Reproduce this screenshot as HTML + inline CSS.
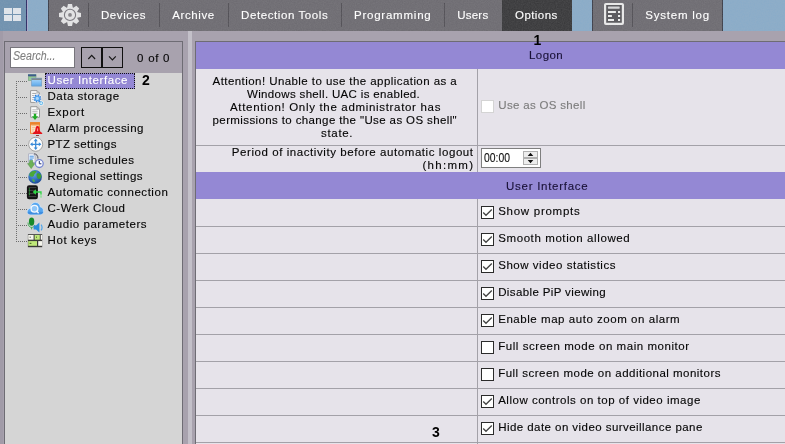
<!DOCTYPE html>
<html><head><meta charset="utf-8"><title>Options</title>
<style>
html,body{margin:0;padding:0}
body{width:785px;height:444px;overflow:hidden;position:relative;background:#a8a2ae;font-family:"Liberation Sans",sans-serif;}
.a{position:absolute}
.t{-webkit-text-stroke:0.12px currentColor;position:absolute;white-space:pre;line-height:16px;height:16px;font-family:"Liberation Sans",sans-serif}
.sep{position:absolute;top:3px;height:24px;width:1px;background:#525056}
.hl{position:absolute;height:1px;background:#a3a1a8}
.cb{position:absolute;width:11px;height:11px;border:1px solid #2b2b2b;background:#fff}
.b{position:absolute;font-weight:bold;font-size:14px;line-height:16px;color:#000;font-family:"Liberation Sans",sans-serif}
</style></head><body><div id="root" style="position:absolute;left:0;top:0;width:785px;height:444px;overflow:hidden;will-change:transform;background:#a8a2ae">
<!-- top bar -->
<div class="a" style="left:0;top:0;width:785px;height:31px;background:#8aacc9"></div>
<div class="a" style="left:0;top:0;width:26px;height:31px;background:#7092b0"></div>
<div class="a" style="left:26px;top:0;width:1px;height:31px;background:#2e2e66"></div><div class="a" style="left:27px;top:0;width:1px;height:31px;background:#a9a8cc"></div>
<div class="a" style="left:48px;top:0;width:454px;height:31px;background:#6e6c72"></div>
<div class="a" style="left:502px;top:0;width:70px;height:31px;background:#3a3a3c"></div>
<div class="a" style="left:592px;top:0;width:131px;height:31px;background:#6e6c72"></div>
<div class="a" style="left:48px;top:0;width:1px;height:31px;background:#3d3f4a"></div><div class="a" style="left:592px;top:0;width:1px;height:31px;background:#3d3f4a"></div><div class="a" style="left:722px;top:0;width:1px;height:31px;background:#3d3f4a"></div><div class="sep" style="left:88px"></div><div class="sep" style="left:159px"></div><div class="sep" style="left:228px"></div>
<div class="sep" style="left:341px"></div><div class="sep" style="left:444px"></div><div class="sep" style="left:632px"></div>
<svg class="a" style="left:0;top:0;opacity:0.11" width="785" height="31"><filter id="nz" x="0" y="0" width="100%" height="100%"><feTurbulence type="fractalNoise" baseFrequency="0.85" numOctaves="2" seed="3"/><feColorMatrix type="matrix" values="0 0 0 0 0.5  0 0 0 0 0.5  0 0 0 0 0.5  1.6 0 0 0 -0.3"/></filter><rect width="785" height="31" filter="url(#nz)"/></svg>
<!-- windows icon -->
<svg class="a" style="left:0;top:0" width="26" height="31"><g fill="#dfe4ea"><rect x="4" y="8" width="8" height="6"/><rect x="13" y="8" width="8" height="6"/><rect x="4" y="15" width="8" height="6"/><rect x="13" y="15" width="8" height="6"/></g></svg>
<!-- gear -->
<svg class="a" style="left:56px;top:1px" width="28" height="28" viewBox="-14 -13.9 28 28"><g fill="#e2e2e3">
<circle r="7.7"/>
<g id="tt"><path d="M-2 -11 H2 L2.9 -7 V7 L2 11 H-2 L-2.9 7 V-7Z"/></g>
<use href="#tt" transform="rotate(45)"/><use href="#tt" transform="rotate(90)"/><use href="#tt" transform="rotate(135)"/>
</g><circle r="5.6" fill="none" stroke="#7c7a80" stroke-width="1.1"/><circle r="1.9" fill="#87858a"/></svg>
<!-- log icon -->
<svg class="a" style="left:603px;top:2px" width="23" height="25" viewBox="0 0 23 25"><rect x="2.1" y="2" width="17.8" height="19.8" rx="0.8" fill="#5d5c60" stroke="#e8e8e8" stroke-width="2.2"/>
<g fill="#ececec"><rect x="4.9" y="4.5" width="11.8" height="2.2" rx="0.6" fill="#d6d6d8"/><rect x="5" y="9" width="7.9" height="2"/><rect x="5" y="13" width="3.9" height="2"/><rect x="5" y="17" width="6" height="2"/><rect x="15" y="9" width="2.1" height="2"/><rect x="15" y="13" width="2.1" height="2"/><rect x="15" y="17" width="2.1" height="2"/></g></svg>

<!-- left panel -->
<div class="a" style="left:0;top:31px;width:3px;height:413px;background:#a19ba8"></div>
<div class="a" style="left:4px;top:41px;width:179px;height:420px;border:1px solid #6e6c74;box-sizing:border-box;background:#a8a2ae"></div>
<div class="a" style="left:5px;top:73px;width:177px;height:380px;background:#d5d5d5"></div>
<div class="a" style="left:10px;top:47px;width:65px;height:21px;box-sizing:border-box;border:1px solid #77757c;background:#fff"></div>
<div class="a" style="left:81px;top:47px;width:21px;height:21px;box-sizing:border-box;border:1px solid #111;background:#a8a2ae"></div>
<div class="a" style="left:102px;top:47px;width:21px;height:21px;box-sizing:border-box;border:1px solid #111;background:#a8a2ae"></div>
<svg class="a" style="left:81px;top:47px" width="42" height="21"><path d="M7.3 12 L10.7 8.4 L14.1 12 M28 9.4 L31.4 13 L34.8 9.4" fill="none" stroke="#161616" stroke-width="1.15"/></svg>
<!-- tree selection -->
<div class="a" style="left:45px;top:73px;width:90px;height:16px;box-sizing:border-box;border:1px dotted #111;background:#9488d4"></div>
<!-- tree dotted lines -->
<svg class="a" style="left:0;top:73px" width="60" height="180"><g stroke="#6c6c6c" stroke-width="1" stroke-dasharray="1 1" fill="none">
<path d="M16.5 8 V169"/>
<path d="M18 8.5H27M18 24.5H27M18 40.5H27M18 56.5H27M18 72.5H27M18 88.5H27M18 104.5H27M18 120.5H27M18 136.5H27M18 152.5H27M18 168.5H27"/></g></svg>
<!--ICONS_START--><!-- icon1: user interface -->
<svg class="a" style="left:27px;top:73px" width="17" height="16"><defs><linearGradient id="wg" x1="0" y1="0" x2="0" y2="1"><stop offset="0" stop-color="#b4dcfb"/><stop offset="1" stop-color="#58a6ea"/></linearGradient></defs><rect x="1" y="1.3" width="8.2" height="6.4" fill="#93cd93"/><rect x="1" y="1.3" width="8.2" height="2.1" fill="#3d5b8c"/><rect x="1.3" y="3.4" width="7.6" height="4" fill="none" stroke="#7da08a" stroke-width="0.6"/>
<rect x="4.4" y="4.9" width="10.5" height="8.4" fill="url(#wg)"/><rect x="4.4" y="4.9" width="10.5" height="2.1" fill="#7f878e"/><rect x="4.7" y="5.2" width="9.9" height="7.8" fill="none" stroke="#7b9cbb" stroke-width="0.6"/></svg>
<!-- icon2: data storage -->
<svg class="a" style="left:27px;top:89px" width="18" height="17"><path d="M3.6 1.6 H10 L12.4 4 V13.4 H3.6Z" fill="#fbfbfb" stroke="#8f8f8f" stroke-width="0.9"/><path d="M10 1.6 V4 H12.4" fill="none" stroke="#9a9a9a" stroke-width="0.8"/><path d="M5.2 4.4H9.6M5.2 6.5H9M5.2 8.6H6.6M5.2 10.6H6.6" stroke="#9a9a9a" stroke-width="0.9"/>
<circle cx="10.3" cy="9.4" r="4.7" fill="#fff" opacity="0.55"/><circle cx="14.2" cy="14.2" r="2.7" fill="#fff" opacity="0.55"/>
<circle cx="10.3" cy="9.4" r="3.3" fill="none" stroke="#2f76d2" stroke-width="1.5" stroke-dasharray="1.3 1.29"/><circle cx="10.3" cy="9.4" r="2.3" fill="#a9d6fc" stroke="#4fa2ee" stroke-width="1.3"/>
<circle cx="14.2" cy="14.2" r="1.5" fill="#d2eefb" stroke="#5fb6ea" stroke-width="0.9"/><path d="M12.2 11.6 L13.2 12.8" stroke="#3a86da" stroke-width="1.2"/></svg>
<!-- icon3: export -->
<svg class="a" style="left:27px;top:105px" width="18" height="17"><path d="M3.7 1.7 H10 L12.5 4.2 V12.3 H3.7Z" fill="#fbfbfb" stroke="#8f8f8f" stroke-width="0.9"/><path d="M10 1.7 V4.2 H12.5" fill="none" stroke="#9a9a9a" stroke-width="0.8"/><path d="M5.3 4.8H10.6M5.3 6.6H10.6M5.3 8.3H10.6" stroke="#b4b4b4" stroke-width="0.9"/>
<path d="M6.8 8.7 H9.2 V11.2 H11.1 L8 14.9 L4.9 11.2 H6.8Z" fill="#20ac24"/></svg>
<!-- icon4: alarm -->
<svg class="a" style="left:27px;top:121px" width="18" height="17"><rect x="3.1" y="1.2" width="9.8" height="11.6" fill="#fbead4"/><rect x="3.1" y="1.2" width="9.8" height="2.6" fill="#ea842c"/><rect x="3.6" y="1.7" width="8.8" height="10.6" fill="none" stroke="#ea842c" stroke-width="1"/><path d="M4.4 4.6H12.4" stroke="#f3b068" stroke-width="0.8"/><path d="M5 6.4H8M5 8.2H7.6M5 10H7" stroke="#f0b982" stroke-width="0.9"/>
<path d="M10.2 5 C9 5 8.7 6.2 8.5 7.4 C8.3 9 8.1 10 7.5 10.8 L5.8 12.1 V12.9 H15.2 V12.1 L13.5 10.8 C12.9 10 12.7 9 12.5 7.4 C12.3 6.2 12 5 10.8 5Z" fill="#e3141a"/><rect x="10" y="7.4" width="1.1" height="2.8" fill="#ff8f84"/><rect x="9" y="14" width="3" height="0.9" fill="#8e2a2a"/></svg>
<!-- icon5: ptz -->
<svg class="a" style="left:27px;top:136px" width="18" height="17"><circle cx="8.7" cy="8.3" r="7" fill="#fdfdfd" stroke="#9a9a9a" stroke-width="0.9"/>
<g stroke="#3b8bd8" stroke-width="1.3" fill="none"><path d="M8.7 3.6V13M4 8.3H13.4"/></g><g fill="#3b8bd8"><path d="M8.7 2.6 L10.7 5.2 H6.7Z M8.7 14 L10.7 11.4 H6.7Z M3 8.3 L5.6 6.3 V10.3Z M14.4 8.3 L11.8 6.3 V10.3Z"/></g></svg>
<!-- icon6: time schedules -->
<svg class="a" style="left:26px;top:152px" width="20" height="18"><path d="M2.6 1.8 H7.2 L9 3.6 V10.5 H2.6Z" fill="#fbfbff" stroke="#a9adc0" stroke-width="0.9"/><path d="M3.6 4.2H7.8M3.6 6H7.8M3.6 7.8H6.6" stroke="#3f8fe0" stroke-width="1"/>
<path d="M3.6 8.4 H6.8 V11.6 H8.8 L5.2 16.6 L1.6 11.6 H3.6Z" fill="#6db257" stroke="#4c9040" stroke-width="0.5"/>
<circle cx="13.3" cy="11.6" r="3.9" fill="#fafaff" stroke="#7686d2" stroke-width="1.3"/><path d="M13.3 9 V11.8 H15.4" fill="none" stroke="#26346a" stroke-width="1"/><path d="M8 1.8 C10.6 2 12 3.6 12 6.6" fill="none" stroke="#445" stroke-width="0.9"/></svg>
<!-- icon7: globe -->
<svg class="a" style="left:27px;top:169px" width="17" height="16"><defs><radialGradient id="gg" cx="0.4" cy="0.3" r="0.8"><stop offset="0" stop-color="#6ea6e6"/><stop offset="0.55" stop-color="#2f6cbc"/><stop offset="1" stop-color="#173f86"/></radialGradient></defs><circle cx="8.1" cy="7.9" r="6.8" fill="url(#gg)"/>
<path d="M3.2 3.8 C4.8 1.8 8.2 1.2 9.6 2.4 C9 4 7.4 4.4 7 6.2 C6.6 8 4.6 8 2.6 7 C2.2 5.6 2.4 4.8 3.2 3.8Z" fill="#4aa83a"/><path d="M10 4.6 C12 3.6 14 5 14.4 7 C14.2 9.2 12.4 10.6 11 9.8 C9.8 8.6 9 6 10 4.6Z" fill="#3f9c36"/><path d="M5.4 10 C6.8 9.8 8.2 11 7.6 13 C6.6 13.4 5 12 5.4 10Z" fill="#4fb046"/></svg>
<!-- icon8: server -->
<svg class="a" style="left:26px;top:185px" width="20" height="16"><rect x="0.9" y="0.2" width="11" height="14" rx="2.2" fill="#131313"/><path d="M2.6 2.6H10.2M2.6 5.4H10.2M2.6 8.6H10.2M2.6 11.6H10.2" stroke="#4a4a4a" stroke-width="0.9"/><path d="M3.4 3.6V11" stroke="#35c045" stroke-width="1.1" stroke-dasharray="1 0.9"/>
<path d="M8.4 7 H15 V9" fill="none" stroke="#2fd243" stroke-width="1.3"/><path d="M15 9V13.6" stroke="#58ea6a" stroke-width="1.2" stroke-dasharray="1.4 0.8"/><path d="M6.6 7 L10 4.2 V9.8Z" fill="#2fd243"/></svg>
<!-- icon9: cloud -->
<svg class="a" style="left:26px;top:201px" width="20" height="16"><path d="M4.6 13.6 C1.8 13.6 0.8 11.2 1.6 9.4 C2.2 8 3.4 7.4 4.4 7.4 C4.4 4 6.6 1.4 9.4 1.4 C12.2 1.4 14 3.4 14.4 6 C16.4 6.2 17.6 8 17.4 10 C17.2 12.2 15.8 13.6 14 13.6Z" fill="#55a6f0" stroke="#cfe6fb" stroke-width="0.8"/><path d="M4.6 13.6 C2.8 13.6 1.5 12.4 1.4 10.8 H17.4 C17 12.6 15.8 13.6 14 13.6Z" fill="#3f8ee0"/>
<circle cx="8.5" cy="7.7" r="3.4" fill="#8ec6f8" stroke="#f4faff" stroke-width="1.3"/><path d="M10.4 9.8 L12.6 12.2" stroke="#f4faff" stroke-width="1.3"/></svg>
<!-- icon10: audio -->
<svg class="a" style="left:26px;top:216px" width="20" height="18"><ellipse cx="5.6" cy="5.6" rx="2.7" ry="4.2" fill="#178a2a"/><path d="M2 6.5 C2 10 4 11.4 5.6 11.4 C7 11.4 8.4 10.6 9 9" fill="none" stroke="#35a84a" stroke-width="0.9"/><path d="M5.6 11.4V13.4" stroke="#35a84a" stroke-width="0.9"/>
<path d="M7.6 9.4 H10 L13.4 6.4 V16.6 L10 13.6 H7.6Z" fill="#2a8cdc"/><path d="M15 8.6 C16.4 10 16.4 13 15 14.4" fill="none" stroke="#4aa4ec" stroke-width="1.2"/></svg>
<!-- icon11: hot keys -->
<svg class="a" style="left:27px;top:234px" width="17" height="14"><rect x="0.9" y="0.2" width="14.3" height="13" fill="#3a3a38"/><rect x="1.2" y="1" width="5.4" height="4.7" fill="#f6f6ee"/><rect x="7.6" y="1" width="5.2" height="4.7" fill="#bfe87a"/><rect x="13.7" y="1" width="1.5" height="4.7" fill="#f6f6ee"/><rect x="1.2" y="7.1" width="8.8" height="4.7" fill="#bfe87a"/><rect x="11.2" y="7.1" width="4" height="4.7" fill="#f6f6ee"/><rect x="2.6" y="2.6" width="1.2" height="1.2" fill="#666"/><rect x="9" y="2.6" width="1" height="1.2" fill="#55752f"/><rect x="2.6" y="8.8" width="1.8" height="1.2" fill="#55752f"/></svg>
<!--ICONS_END-->
<!-- splitter -->
<div class="a" style="left:188px;top:31px;width:4px;height:413px;background:#c3c0c9"></div>
<!-- right panel -->
<div class="a" style="left:195px;top:41px;width:600px;height:420px;border:1px solid #6e6c74;box-sizing:border-box;background:#e6e3ea"></div>
<div class="a" style="left:196px;top:42px;width:600px;height:27px;background:#9488d4"></div>
<div class="a" style="left:196px;top:172px;width:600px;height:27px;background:#9488d4"></div>
<div class="a" style="left:477px;top:69px;width:1px;height:103px;background:#a3a1a8"></div>
<div class="a" style="left:477px;top:199px;width:1px;height:250px;background:#a3a1a8"></div>
<div class="hl" style="left:196px;top:145px;width:600px"></div>
<div class="hl" style="left:196px;top:226px;width:600px"></div><div class="hl" style="left:196px;top:253px;width:600px"></div><div class="hl" style="left:196px;top:280px;width:600px"></div><div class="hl" style="left:196px;top:307px;width:600px"></div><div class="hl" style="left:196px;top:334px;width:600px"></div><div class="hl" style="left:196px;top:361px;width:600px"></div><div class="hl" style="left:196px;top:388px;width:600px"></div><div class="hl" style="left:196px;top:415px;width:600px"></div><div class="hl" style="left:196px;top:442px;width:600px"></div>
<!-- disabled checkbox -->
<div class="a" style="left:481px;top:100px;width:13px;height:13px;box-sizing:border-box;border:1px solid #d4d4d4;background:#fff"></div>
<!-- time box -->
<div class="a" style="left:481px;top:148px;width:60px;height:20px;box-sizing:border-box;border:1px solid #7f7f7f;background:#fff"></div>
<div class="a" style="left:523px;top:151px;width:15px;height:7px;box-sizing:border-box;border:1px solid #b0b0b0;background:#ededed"></div>
<div class="a" style="left:523px;top:158px;width:15px;height:7px;box-sizing:border-box;border:1px solid #b0b0b0;background:#ededed"></div>
<svg class="a" style="left:523px;top:151px" width="15" height="14"><path d="M4.7 5 L7.5 1.8 L10.3 5Z M4.7 9 L7.5 12.2 L10.3 9Z" fill="#111"/></svg>
<div class="cb" style="left:481px;top:206px"></div><svg class="a" style="left:481px;top:206px" width="13" height="13"><path d="M2.2 6.5 L5 9.3 L10.8 3.5" fill="none" stroke="#444" stroke-width="1.3"/></svg><div class="cb" style="left:481px;top:233px"></div><svg class="a" style="left:481px;top:233px" width="13" height="13"><path d="M2.2 6.5 L5 9.3 L10.8 3.5" fill="none" stroke="#444" stroke-width="1.3"/></svg><div class="cb" style="left:481px;top:260px"></div><svg class="a" style="left:481px;top:260px" width="13" height="13"><path d="M2.2 6.5 L5 9.3 L10.8 3.5" fill="none" stroke="#444" stroke-width="1.3"/></svg><div class="cb" style="left:481px;top:287px"></div><svg class="a" style="left:481px;top:287px" width="13" height="13"><path d="M2.2 6.5 L5 9.3 L10.8 3.5" fill="none" stroke="#444" stroke-width="1.3"/></svg><div class="cb" style="left:481px;top:314px"></div><svg class="a" style="left:481px;top:314px" width="13" height="13"><path d="M2.2 6.5 L5 9.3 L10.8 3.5" fill="none" stroke="#444" stroke-width="1.3"/></svg><div class="cb" style="left:481px;top:341px"></div><div class="cb" style="left:481px;top:368px"></div><div class="cb" style="left:481px;top:395px"></div><svg class="a" style="left:481px;top:395px" width="13" height="13"><path d="M2.2 6.5 L5 9.3 L10.8 3.5" fill="none" stroke="#444" stroke-width="1.3"/></svg><div class="cb" style="left:481px;top:422px"></div><svg class="a" style="left:481px;top:422px" width="13" height="13"><path d="M2.2 6.5 L5 9.3 L10.8 3.5" fill="none" stroke="#444" stroke-width="1.3"/></svg>
<span class="b" style="left:533.5px;top:32px">1</span>
<span class="b" style="left:142px;top:72px">2</span>
<span class="b" style="left:432px;top:423.5px">3</span>
<span class="t" style="left:100.9px;top:7.0px;color:#ffffff;font-size:11.5px;letter-spacing:0.616px;">Devices</span>
<span class="t" style="left:172.3px;top:7.0px;color:#ffffff;font-size:11.5px;letter-spacing:0.59px;">Archive</span>
<span class="t" style="left:241.1px;top:7.0px;color:#ffffff;font-size:11.5px;letter-spacing:0.584px;">Detection Tools</span>
<span class="t" style="left:354.0px;top:7.0px;color:#ffffff;font-size:11.5px;letter-spacing:0.767px;">Programming</span>
<span class="t" style="left:457.2px;top:7.0px;color:#ffffff;font-size:11.5px;letter-spacing:0.242px;">Users</span>
<span class="t" style="left:515.1px;top:7.0px;color:#ffffff;font-size:11.5px;letter-spacing:0.41px;">Options</span>
<span class="t" style="left:645.2px;top:7.0px;color:#ffffff;font-size:11.5px;letter-spacing:0.79px;">System log</span>
<span class="t" style="left:12.7px;top:47.7px;color:#7f7f7f;font-size:12.5px;letter-spacing:0px;transform:scaleX(0.8495);transform-origin:0 0;font-style:italic;">Search...</span>
<span class="t" style="left:137.1px;top:50.0px;color:#050505;font-size:11.5px;letter-spacing:0.724px;">0 of 0</span>
<span class="t" style="left:47.5px;top:72.0px;color:#ffffff;font-size:11.5px;letter-spacing:0.597px;">User Interface</span>
<span class="t" style="left:47.5px;top:88.0px;color:#050505;font-size:11.5px;letter-spacing:0.522px;">Data storage</span>
<span class="t" style="left:47.5px;top:104.0px;color:#050505;font-size:11.5px;letter-spacing:0.69px;">Export</span>
<span class="t" style="left:47.5px;top:120.0px;color:#050505;font-size:11.5px;letter-spacing:0.47px;">Alarm processing</span>
<span class="t" style="left:47.5px;top:136.0px;color:#050505;font-size:11.5px;letter-spacing:0.394px;">PTZ settings</span>
<span class="t" style="left:47.5px;top:152.0px;color:#050505;font-size:11.5px;letter-spacing:0.492px;">Time schedules</span>
<span class="t" style="left:47.5px;top:168.0px;color:#050505;font-size:11.5px;letter-spacing:0.423px;">Regional settings</span>
<span class="t" style="left:47.5px;top:184.0px;color:#050505;font-size:11.5px;letter-spacing:0.545px;">Automatic connection</span>
<span class="t" style="left:47.5px;top:200.0px;color:#050505;font-size:11.5px;letter-spacing:0.5px;">C-Werk Cloud</span>
<span class="t" style="left:47.5px;top:216.0px;color:#050505;font-size:11.5px;letter-spacing:0.555px;">Audio parameters</span>
<span class="t" style="left:47.5px;top:232.0px;color:#050505;font-size:11.5px;letter-spacing:0.621px;">Hot keys</span>
<span class="t" style="left:529.1px;top:47.0px;color:#1a1238;font-size:11.5px;letter-spacing:0.379px;">Logon</span>
<span class="t" style="left:506.1px;top:178.0px;color:#1a1238;font-size:11.5px;letter-spacing:0.72px;">User Interface</span>
<span class="t" style="left:212.6px;top:73.0px;color:#050505;font-size:11.5px;letter-spacing:0.433px;">Attention! Unable to use the application as a</span>
<span class="t" style="left:247.0px;top:86.0px;color:#050505;font-size:11.5px;letter-spacing:0.338px;">Windows shell. UAC is enabled.</span>
<span class="t" style="left:230.0px;top:99.0px;color:#050505;font-size:11.5px;letter-spacing:0.677px;">Attention! Only the administrator has</span>
<span class="t" style="left:212.6px;top:112.0px;color:#050505;font-size:11.5px;letter-spacing:0.382px;">permissions to change the &quot;Use as OS shell&quot;</span>
<span class="t" style="left:321.1px;top:125.0px;color:#050505;font-size:11.5px;letter-spacing:0.652px;">state.</span>
<span class="t" style="left:231.8px;top:143.5px;color:#050505;font-size:11.5px;letter-spacing:0.57px;">Period of inactivity before automatic logout</span>
<span class="t" style="left:422.4px;top:156.6px;color:#050505;font-size:11.5px;letter-spacing:1.298px;">(hh:mm)</span>
<span class="t" style="left:483.5px;top:149.7px;color:#111;font-size:12.5px;letter-spacing:0px;transform:scaleX(0.8280);transform-origin:0 0;">00:00</span>
<span class="t" style="left:498.3px;top:97.0px;color:#7c7c7c;font-size:11.5px;letter-spacing:0.318px;">Use as OS shell</span>
<span class="t" style="left:498.2px;top:203.0px;color:#050505;font-size:11.5px;letter-spacing:0.726px;">Show prompts</span>
<span class="t" style="left:498.2px;top:230.0px;color:#050505;font-size:11.5px;letter-spacing:0.598px;">Smooth motion allowed</span>
<span class="t" style="left:498.2px;top:257.0px;color:#050505;font-size:11.5px;letter-spacing:0.527px;">Show video statistics</span>
<span class="t" style="left:498.2px;top:284.0px;color:#050505;font-size:11.5px;letter-spacing:0.372px;">Disable PiP viewing</span>
<span class="t" style="left:498.2px;top:311.0px;color:#050505;font-size:11.5px;letter-spacing:0.546px;">Enable map auto zoom on alarm</span>
<span class="t" style="left:498.2px;top:338.0px;color:#050505;font-size:11.5px;letter-spacing:0.55px;">Full screen mode on main monitor</span>
<span class="t" style="left:498.2px;top:365.0px;color:#050505;font-size:11.5px;letter-spacing:0.484px;">Full screen mode on additional monitors</span>
<span class="t" style="left:498.2px;top:392.0px;color:#050505;font-size:11.5px;letter-spacing:0.514px;">Allow controls on top of video image</span>
<span class="t" style="left:498.2px;top:419.0px;color:#050505;font-size:11.5px;letter-spacing:0.443px;">Hide date on video surveillance pane</span>
</div></body></html>
